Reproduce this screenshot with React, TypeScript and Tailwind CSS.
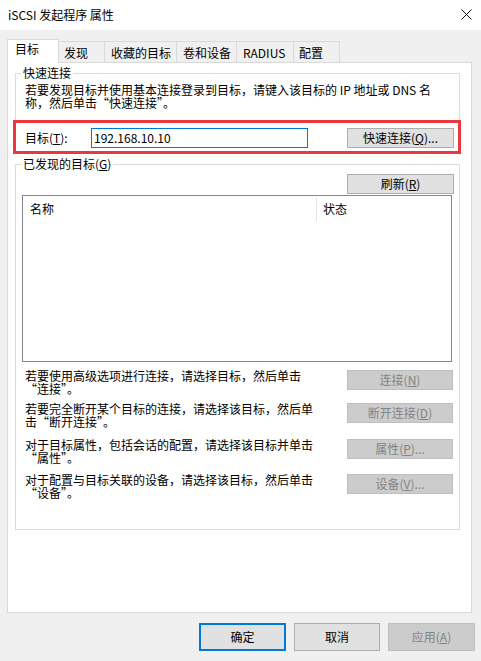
import React from "react";

const btn =
  "h-[20px] bg-[#e1e1e1] border border-[#adadad] flex items-center justify-center leading-[14px] text-[12px] text-black";
const btnDis =
  "h-[20px] bg-[#cccccc] border border-[#bfbfbf] flex items-center justify-center leading-[14px] text-[12px] text-[#838383]";

function Row({
  mt,
  l1,
  l2,
  label,
}: {
  mt: string;
  l1: React.ReactNode;
  l2: React.ReactNode;
  label: React.ReactNode;
}) {
  return (
    <div className={`flex items-start justify-between pl-[9px] pr-[6px] h-[26px] ${mt}`}>
      <div className="leading-[13px] whitespace-nowrap -mt-[1px]">
        {l1}
        <br />
        {l2}
      </div>
      <div className={`w-[106px] ${btnDis}`}>{label}</div>
    </div>
  );
}

export default function App() {
  return (
    <div className="w-[481px] h-[661px] bg-[#f0f0f0] flex flex-col font-['Noto_Sans_CJK_SC',sans-serif] text-[12px] text-black overflow-hidden">
      {/* title bar */}
      <div className="h-[30px] shrink-0 bg-white flex items-center justify-between pl-[8px] pr-[9px]">
        <span className="leading-[14px] text-[12px] -mt-[1px]">iSCSI 发起程序 属性</span>
        <svg width="11" height="11" viewBox="0 0 11 11" className="-mt-[1px]">
          <path d="M0.5 0.5 L10.5 10.5 M10.5 0.5 L0.5 10.5" stroke="#111" strokeWidth="1" fill="none" />
        </svg>
      </div>

      <div className="px-[7px] pt-[9px]">
        {/* tabs */}
        <div className="flex items-end h-[23px]">
          <div className="relative z-10 w-[52px] h-[24px] -mb-px bg-white border border-b-0 border-[#d9d9d9] pl-[7px] pt-[2px] leading-[14px]">
            目标
          </div>
          <div className="-ml-px w-[47px] h-[21px] border border-b-0 border-[#d9d9d9] pl-[5px] pt-[4px] leading-[14px]">
            发现
          </div>
          <div className="-ml-px w-[73px] h-[21px] border border-b-0 border-[#d9d9d9] pl-[6px] pt-[4px] leading-[14px]">
            收藏的目标
          </div>
          <div className="-ml-px w-[61px] h-[21px] border border-b-0 border-[#d9d9d9] pl-[6px] pt-[4px] leading-[14px]">
            卷和设备
          </div>
          <div className="-ml-px w-[58px] h-[21px] border border-b-0 border-[#d9d9d9] pl-[6px] pt-[4px] leading-[14px]">
            RADIUS
          </div>
          <div className="-ml-px w-[47px] h-[21px] border border-b-0 border-[#d9d9d9] pl-[5px] pt-[4px] leading-[14px]">
            配置
          </div>
        </div>

        {/* panel */}
        <div className="relative w-[465px] h-[551px] bg-white border border-[#d9d9d9]">
          {/* group 1 */}
          <fieldset className="ml-[7px] mt-[3px] w-[445px] h-[88px] border border-[#dcdcdc] p-0">
            <legend className="ml-[5px] px-[2px] leading-[14px]">快速连接</legend>
            <div className="pl-[9px] pt-[3px] leading-[13px] whitespace-nowrap">
              若要发现目标并使用基本连接登录到目标，请键入该目标的 IP 地址或 DNS 名
              <br />
              称，然后单击“快速连接”。
            </div>
            <div className="mt-[19px] flex items-center h-[20px] pl-[9px] pr-[5px]">
              <span className="w-[66px] leading-[14px]">
                目标(<span className="underline">T</span>):
              </span>
              <div className="w-[217px] h-[20px] border border-[#0078d7] flex items-center pl-[2px] leading-[14px]">
                192.168.10.10
              </div>
              <div className={`ml-auto w-[107px] ${btn}`}>
                快速连接(<span className="underline">Q</span>)...
              </div>
            </div>
          </fieldset>

          {/* group 2 */}
          <fieldset className="ml-[7px] mt-[3px] w-[445px] border border-[#dcdcdc] p-0 pb-[29px]">
            <legend className="ml-[5px] px-[2px] leading-[14px]">
              已发现的目标(<span className="underline">G</span>)
            </legend>
            <div className="flex justify-end pr-[5px] pt-[3px]">
              <div className={`w-[107px] ${btn}`}>
                刷新(<span className="underline">R</span>)
              </div>
            </div>
            <div className="ml-[6px] mt-[1px] w-[430px] h-[167px] border border-[#828790] bg-white">
              <div className="flex h-[25px] items-center">
                <div className="w-[294px] h-[24px] pl-[7px] border-r border-[#e5e5e5] flex items-center leading-[14px]">
                  名称
                </div>
                <div className="pl-[6px] leading-[14px]">状态</div>
              </div>
            </div>

            <Row
              mt="mt-[8px]"
              l1="若要使用高级选项进行连接，请选择目标，然后单击"
              l2="“连接”。"
              label={
                <>
                  连接(<span className="underline">N</span>)
                </>
              }
            />
            <Row
              mt="mt-[7px]"
              l1="若要完全断开某个目标的连接，请选择该目标，然后单"
              l2="击“断开连接”。"
              label={
                <>
                  断开连接(<span className="underline">D</span>)
                </>
              }
            />
            <Row
              mt="mt-[10px]"
              l1="对于目标属性，包括会话的配置，请选择该目标并单击"
              l2="“属性”。"
              label={
                <>
                  属性(<span className="underline">P</span>)...
                </>
              }
            />
            <Row
              mt="mt-[9px]"
              l1="对于配置与目标关联的设备，请选择该目标，然后单击"
              l2="“设备”。"
              label={
                <>
                  设备(<span className="underline">V</span>)...
                </>
              }
            />
          </fieldset>

          {/* red highlight annotation */}
          <div className="absolute left-[5px] top-[57px] w-[448px] h-[34px] border-[3px] border-[#e9393f] pointer-events-none" />
        </div>
      </div>

      {/* bottom buttons */}
      <div className="flex justify-end gap-[8px] pr-[6px] mt-[10px]">
        <div className="w-[87px] h-[28px] bg-[#e1e1e1] border-2 border-[#0078d7] flex items-center justify-center leading-[14px]">
          确定
        </div>
        <div className="w-[86px] h-[28px] bg-[#e1e1e1] border border-[#adadad] flex items-center justify-center leading-[14px]">
          取消
        </div>
        <div className="w-[87px] h-[28px] bg-[#cccccc] border border-[#bfbfbf] flex items-center justify-center leading-[14px] text-[#838383]">
          应用(<span className="underline">A</span>)
        </div>
      </div>
    </div>
  );
}
